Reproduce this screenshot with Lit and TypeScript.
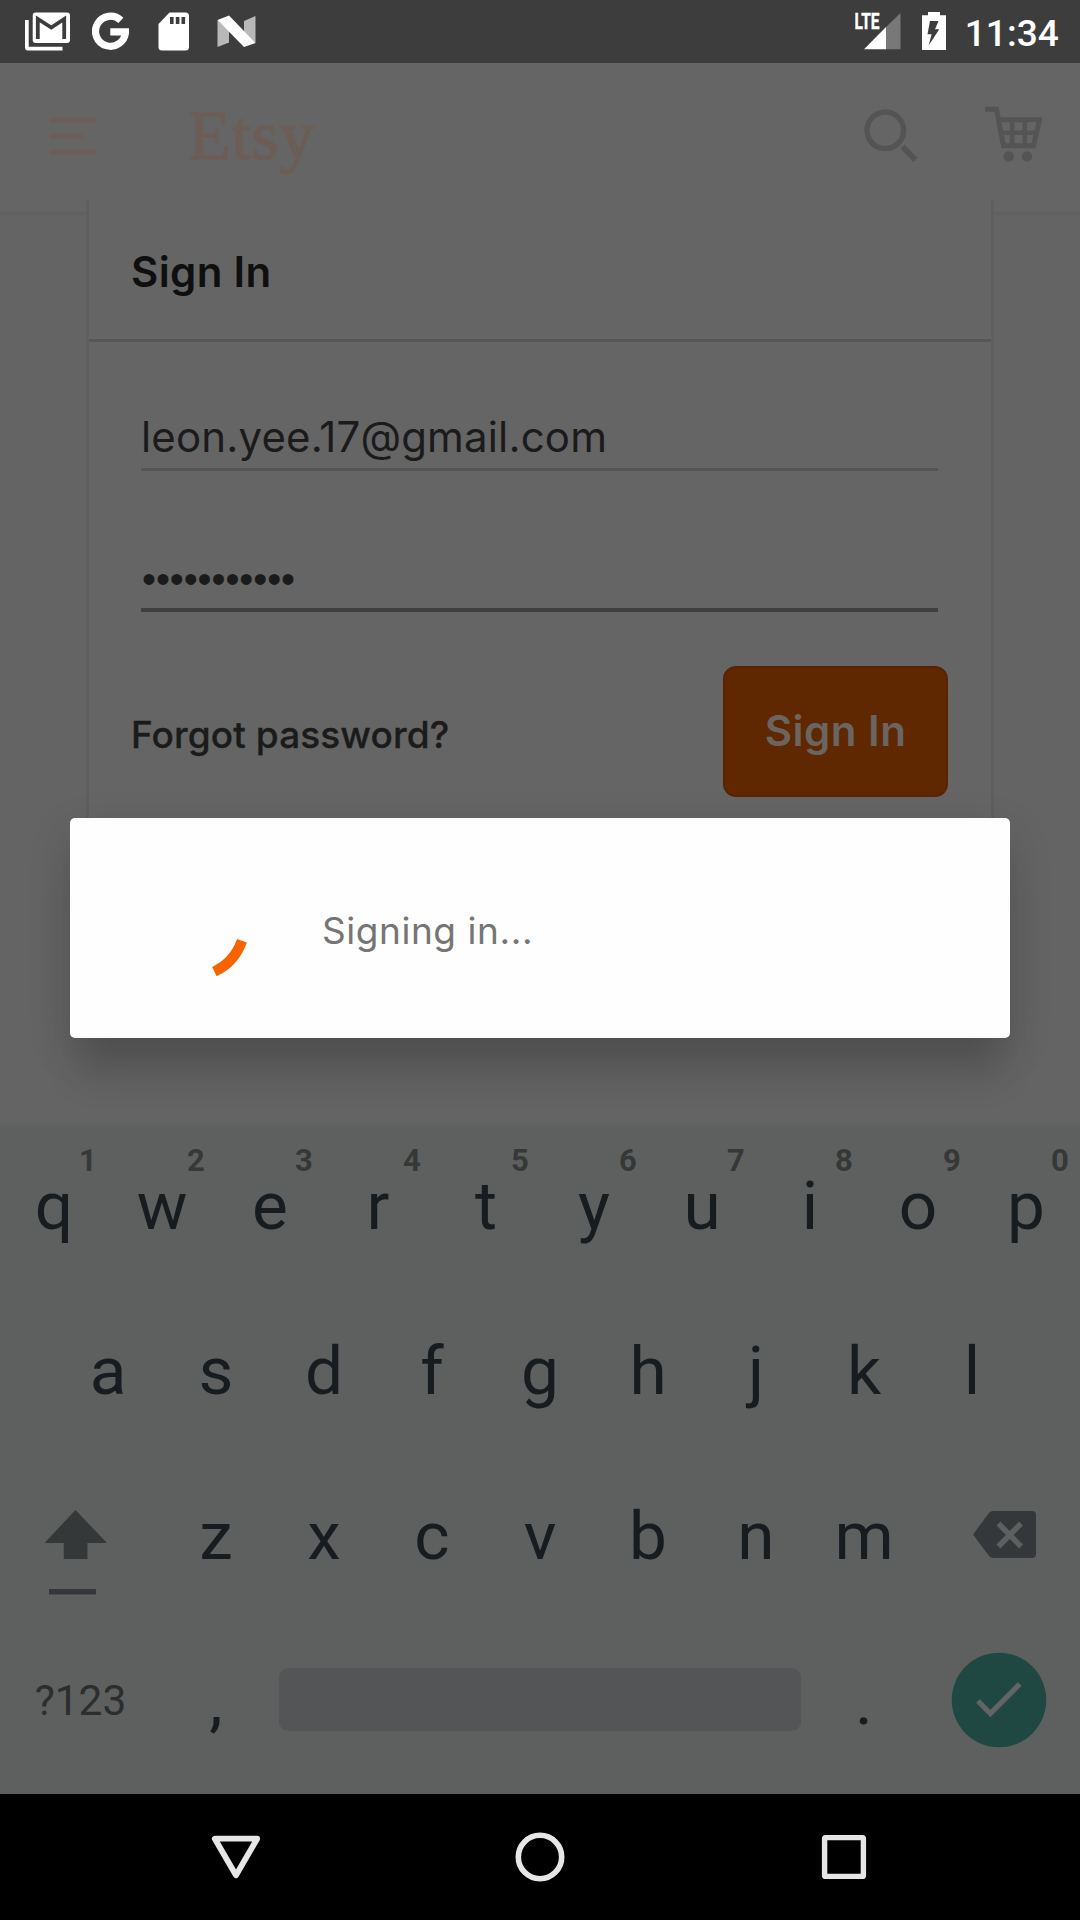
import { LitElement, html, css } from "lit";
import { customElement } from "lit/decorators.js";

@customElement("status-bar")
class StatusBar extends LitElement {
  static styles = css`
    :host { display: flex; height: 63px; background: #3d3d3d; color: #fff; justify-content: space-between; }
    .group { display: flex; }
    .left { padding-left: 25px; }
    .right { padding-right: 21px; }
    .mail { margin-right: 22px; }
    .google { margin-right: 29px; }
    .sd { margin-right: 28px; }
    .signal { margin-right: 21px; }
    .battery { margin-right: 19px; }
    .lte { font: 700 21.5px Roboto, sans-serif; }
    .time { font: 500 37px/68px Roboto, sans-serif; letter-spacing: 0.1px; }
  `;
  render() {
    return html`
      <div class="group left">
        <svg class="mail" width="45" height="63" viewBox="25 0 45 63">
          <path d="M25 20H28.7V46.8H62.5V50.5H28Q25 50.5 25 47.5Z" fill="#fff" />
          <rect x="32.7" y="12.5" width="37.3" height="30.5" rx="3" fill="#fff" />
          <path d="M37.8 39V19L51.3 27.6L64.2 19V39" fill="none" stroke="#3d3d3d" stroke-width="3.8" />
        </svg>
        <svg class="google" width="37" height="63" viewBox="92 0 37 63">
          <path d="M120.9 20.4A15 15 0 1 0 125.5 31.9H110.3" fill="none" stroke="#fff" stroke-width="7.2" />
        </svg>
        <svg class="sd" width="31" height="63" viewBox="158 0 31 63">
          <path d="M169.5 12.5H185.5Q189 12.5 189 16V47Q189 50.5 185.5 50.5H162Q158.5 50.5 158.5 47V24Z" fill="#fff" />
          <path d="M170 17h3.6v7h-3.6zM175.8 17h3.6v7h-3.6zM181.5 17h3.6v7h-3.6z" fill="#3d3d3d" />
        </svg>
        <svg width="39" height="63" viewBox="217 0 39 63">
          <path d="M217.5 20L229 31V42.5L217.5 47ZM244 21L255.5 16V43L244 33Z" fill="#b8b8b8" />
          <path d="M217.5 20L229 15.5L255.5 43L244 47Z" fill="#fff" />
        </svg>
      </div>
      <div class="group right">
        <svg class="signal" width="46" height="63" viewBox="855 0 46 63">
          <path d="M886 27L900.5 13V49.3H886Z" fill="#787878" />
          <path d="M864 49.3L886 27V49.3Z" fill="#fff" />
          <text class="lte" x="854.5" y="29.3" textLength="25" lengthAdjust="spacingAndGlyphs" fill="#fff" stroke="#fff" stroke-width="0.4">LTE</text>
        </svg>
        <svg class="battery" width="24" height="63" viewBox="922 0 24 63">
          <path d="M922 15.3H928V12H940V15.3H946V50H922Z" fill="#fff" />
          <path d="M930 21H938.5L935 29.3H939.3L928.6 45.5L931.6 34.3H927.5Z" fill="#3d3d3d" />
        </svg>
        <div class="time">11:34</div>
      </div>
    `;
  }
}

@customElement("app-header")
class AppHeader extends LitElement {
  static styles = css`
    :host { display: flex; height: 137px; background: #656565; padding: 0 38px 0 50px; box-sizing: border-box; }
    .brand { margin-left: 92px; font: 70px/145px "Liberation Serif", serif; letter-spacing: 0.7px; color: #6c5e57; -webkit-text-stroke: 1.4px #6c5e57; flex: 1; }
    .search { margin-right: 67px; }
  `;
  render() {
    return html`
      <svg width="46" height="137" viewBox="50 63 46 137">
        <path d="M50 120.3H96M50 136.3H84M50 152.3H96" stroke="#6c5f59" stroke-width="5.6" />
      </svg>
      <div class="brand">Etsy</div>
      <svg class="search" width="54" height="137" viewBox="864 63 54 137" fill="none" stroke="#545454">
        <circle cx="885.3" cy="130.3" r="18.3" stroke-width="5.4" />
        <path d="M902.5 146.5L915.5 160" stroke-width="5.6" />
      </svg>
      <svg width="57" height="137" viewBox="985 63 57 137" fill="none" stroke="#545454" stroke-width="5">
        <path d="M985 109.3H996.5L1003.5 145.8H1033.5L1039.5 119.8H999" />
        <path d="M1001 132.8H1037M1012.2 120V146M1024.8 120V146" stroke-width="4.6" />
        <circle cx="1008.7" cy="156.4" r="5.2" fill="#545454" stroke="none" />
        <circle cx="1027" cy="156.4" r="5.2" fill="#545454" stroke="none" />
      </svg>
    `;
  }
}

@customElement("sign-in-form")
class SignInForm extends LitElement {
  static styles = css`
    :host { display: flex; height: 924px; background: #646464; font-family: Inter, "Liberation Sans", sans-serif; }
    .gutter-left { width: 86px; }
    .gutter-right { flex: 1; }
    .edge { height: 12px; background: #656565; border-bottom: 3px solid #616161; }
    .card { width: 902px; height: 790px; background: #656565; border: solid #5f5f5f; border-width: 0 3px; }
    .title { height: 139px; padding-left: 42px; font-size: 42px; font-weight: 600; line-height: 143px; letter-spacing: 0.35px; color: #0f0f0f; border-bottom: 3px solid #565656; }
    .field { margin: 0 53px 0 52px; color: #1b1b1b; }
    .email { height: 64px; padding-top: 62px; font-size: 42px; line-height: 65px; letter-spacing: 0.15px; border-bottom: 3px solid #555; }
    .password { height: 60px; padding: 77px 0 0 1px; font: 40px/63px "Liberation Sans", sans-serif; letter-spacing: -0.1px; border-bottom: 4px solid #3f3f3f; }
    .actions { display: flex; justify-content: space-between; padding: 54px 43px 0 42px; }
    .forgot { font-size: 37px; font-weight: 500; line-height: 138px; letter-spacing: 0.1px; color: #1b1b1b; -webkit-text-stroke: 0.3px #1b1b1b; }
    .submit { width: 225px; height: 131px; box-sizing: border-box; border: 2px solid #5a2300; border-radius: 13px; background: #602800; color: #6a6561; text-align: center; font-size: 42px; font-weight: 600; line-height: 125px; letter-spacing: 0.5px; }
  `;
  render() {
    return html`
      <div class="gutter-left"><div class="edge"></div></div>
      <div class="card">
        <div class="title">Sign In</div>
        <div class="field email">leon.yee.17@gmail.com</div>
        <div class="field password">•••••••••••</div>
        <div class="actions">
          <div class="forgot">Forgot password?</div>
          <div class="submit">Sign In</div>
        </div>
      </div>
      <div class="gutter-right"><div class="edge"></div></div>
    `;
  }
}

@customElement("soft-keyboard")
class SoftKeyboard extends LitElement {
  static styles = css`
    :host { display: flex; flex-direction: column; height: 670px; padding-top: 10px; box-sizing: border-box; background: linear-gradient(#616261, #5e605f 5px); font-family: Roboto, sans-serif; color: #171c20; }
    .row { display: flex; height: 165px; justify-content: center; }
    .key { position: relative; width: 108px; text-align: center; font-size: 67.5px; line-height: 144px; }
    .hint { position: absolute; left: 68px; top: 0; width: 40px; font-size: 31px; font-weight: 700; line-height: 53px; color: #363838; }
    .side { width: 162px; }
    .symbols { width: 161px; padding-right: 1px; text-align: center; font-size: 42.5px; line-height: 144px; color: #2b2d2e; }
    .space { width: 522px; height: 63px; margin: 39px 9px 0; border-radius: 9px; background: #545557; }
  `;
  key(k: string, hint = "") {
    return html`<div class="key">${k}${hint ? html`<span class="hint">${hint}</span>` : ""}</div>`;
  }
  render() {
    return html`
      <div class="row">${[..."qwertyuiop"].map((k, i) => this.key(k, String((i + 1) % 10)))}</div>
      <div class="row">${[..."asdfghjkl"].map((k) => this.key(k))}</div>
      <div class="row">
        <svg class="side" height="165" viewBox="0 1464 162 165">
          <path d="M75.5 1510L107 1543H87.5V1559H63.7V1543H44.5Z" fill="#353838" />
          <rect x="49" y="1589" width="47" height="5.5" fill="#35363c" />
        </svg>
        ${[..."zxcvbnm"].map((k) => this.key(k))}
        <svg class="side" height="165" viewBox="918 1464 162 165">
          <path d="M993 1511H1032Q1036 1511 1036 1515V1554Q1036 1558 1032 1558H993Q990.5 1558 989 1556L973 1534.5L989 1513Q990.5 1511 993 1511Z" fill="#35383a" />
          <path d="M998.5 1523.5L1021 1546.5M1021 1523.5L998.5 1546.5" stroke="#5e605f" stroke-width="5.5" />
        </svg>
      </div>
      <div class="row">
        <div class="symbols">?123</div>
        ${this.key(",")}
        <div class="space"></div>
        ${this.key(".")}
        <svg class="side" height="165" viewBox="918 1629 162 165">
          <circle cx="999" cy="1700" r="47.3" fill="#1f4843" />
          <path d="M978 1701L990.3 1713.5L1019.7 1684" fill="none" stroke="#646464" stroke-width="5.2" />
        </svg>
      </div>
    `;
  }
}

@customElement("nav-bar")
class NavBar extends LitElement {
  static styles = css`
    :host { display: flex; height: 126px; background: #000; justify-content: center; gap: 254px; }
  `;
  render() {
    return html`
      <svg width="50" height="126" viewBox="211 1794 50 126">
        <path d="M214.8 1838.7H257.2L236 1875.3Z" fill="none" stroke="#e6e6e6" stroke-width="5.8" stroke-linejoin="round" />
      </svg>
      <svg width="50" height="126" viewBox="515 1794 50 126">
        <circle cx="540" cy="1857" r="21.7" fill="none" stroke="#e6e6e6" stroke-width="5.6" />
      </svg>
      <svg width="50" height="126" viewBox="819 1794 50 126">
        <rect x="824.6" y="1837.6" width="38.8" height="38.8" rx="1" fill="none" stroke="#e6e6e6" stroke-width="5.4" stroke-linejoin="round" />
      </svg>
    `;
  }
}

@customElement("app-root")
class AppRoot extends LitElement {
  static styles = css`
    :host { display: block; position: relative; width: 1080px; height: 1920px; overflow: hidden; background: #646464; }
    .dialog {
      position: absolute; left: 70px; top: 818px; width: 940px; height: 220px; box-sizing: border-box;
      display: flex; align-items: center; padding-left: 68px; border-radius: 5px; background: #fefefe;
      box-shadow: 0 46px 36px -8px rgba(0, 0, 0, 0.12), 0 14px 44px rgba(0, 0, 0, 0.13);
    }
    .message { margin-left: 76px; font: 400 37px/42px Inter, "Liberation Sans", sans-serif; letter-spacing: 0.55px; color: #757575; padding-top: 6px; }
  `;
  render() {
    return html`
      <status-bar></status-bar>
      <app-header></app-header>
      <sign-in-form></sign-in-form>
      <soft-keyboard></soft-keyboard>
      <nav-bar></nav-bar>
      <div class="dialog">
        <svg width="108" height="108" viewBox="138 874 108 108" overflow="visible">
          <path d="M241.9 940.8A53 53 0 0 1 214.4 971.6" fill="none" stroke="#f56400" stroke-width="10.4" />
        </svg>
        <div class="message">Signing in...</div>
      </div>
    `;
  }
}
